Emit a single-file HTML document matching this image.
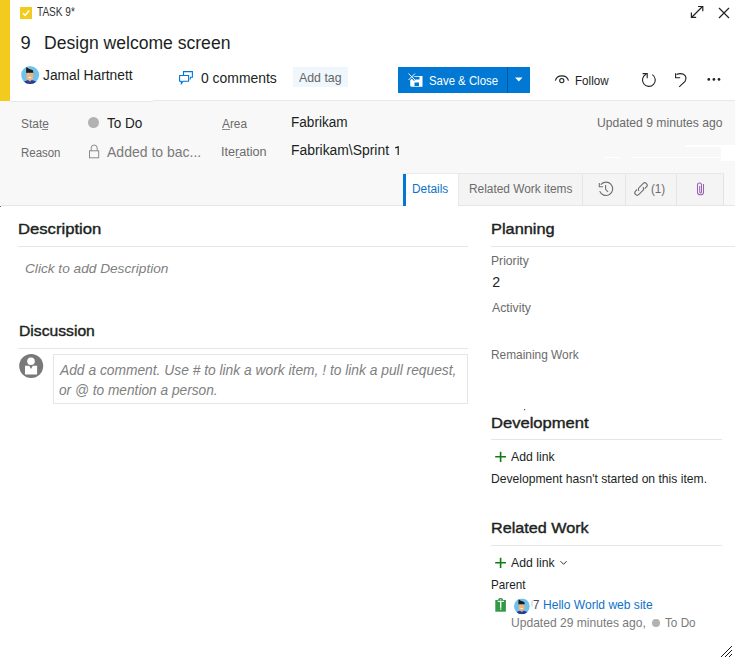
<!DOCTYPE html>
<html><head><meta charset="utf-8"><style>
html,body{margin:0;padding:0;}
body{width:735px;height:661px;position:relative;overflow:hidden;background:#fff;font-family:"Liberation Sans",sans-serif;}
.t{position:absolute;white-space:pre;line-height:1;transform-origin:0 0;}
.a{position:absolute;}

</style></head><body>
<div class="a" style="left:0;top:0;width:10px;height:101px;background:#f2cb1d"></div>
<div class="a" style="left:0;top:101px;width:153px;height:1px;background:#e8e8e8"></div>
<div class="a" style="left:0;top:102px;width:153px;height:103px;background:#f8f8f8"></div>
<div class="a" style="left:0;top:101px;width:10px;height:1px;background:#f8f8f8"></div>
<div class="a" style="left:153px;top:100px;width:582px;height:1px;background:#e8e8e8"></div>
<div class="a" style="left:153px;top:101px;width:582px;height:104px;background:#f8f8f8"></div>
<div class="a" style="left:1px;top:205px;width:734px;height:1px;background:#e6e6e6"></div>
<div class="a" style="left:0;top:206px;width:1px;height:1px;background:#666"></div>
<!-- glitch whites -->
<div class="a" style="left:685px;top:145px;width:50px;height:2px;background:#fff"></div>
<div class="a" style="left:721px;top:145px;width:14px;height:16px;background:#fff"></div>
<div class="a" style="left:631px;top:157px;width:90px;height:1px;background:#fff"></div>
<div class="a" style="left:605px;top:157px;width:15px;height:1px;background:#fff"></div>
<!-- tabs -->
<div class="a" style="left:403px;top:173px;width:321px;height:32px;background:#f4f4f4;box-sizing:border-box;border-top:1px solid #e8e8e8;border-right:1px solid #e3e3e3"></div>
<div class="a" style="left:403px;top:174px;width:3px;height:32px;background:#0078d4"></div>
<div class="a" style="left:406px;top:173px;width:52px;height:33px;background:#fff;border-top:1px solid #ebebeb;box-sizing:border-box"></div>
<div class="a" style="left:458px;top:174px;width:1px;height:31px;background:#e8e8e8"></div>
<div class="a" style="left:582px;top:174px;width:1px;height:31px;background:#e6e6e6"></div>
<div class="a" style="left:625px;top:174px;width:1px;height:31px;background:#e6e6e6"></div>
<div class="a" style="left:676px;top:174px;width:1px;height:31px;background:#e6e6e6"></div>
<!-- add tag -->
<div class="a" style="left:293px;top:67px;width:55px;height:20px;background:#eff6fc"></div>
<!-- save button -->
<div class="a" style="left:398px;top:67px;width:132px;height:26px;background:#0078d4"></div>
<div class="a" style="left:507px;top:67px;width:1px;height:26px;background:#005a9e"></div>
<!-- section lines -->
<div class="a" style="left:18px;top:246px;width:450px;height:1px;background:#e6e6e6"></div>
<div class="a" style="left:18px;top:348px;width:450px;height:1px;background:#e6e6e6"></div>
<div class="a" style="left:491px;top:246px;width:244px;height:1px;background:#e6e6e6"></div>
<div class="a" style="left:491px;top:439px;width:231px;height:1px;background:#e6e6e6"></div>
<div class="a" style="left:491px;top:545px;width:231px;height:1px;background:#e6e6e6"></div>
<!-- comment box -->
<div class="a" style="left:53px;top:354px;width:415px;height:50px;box-sizing:border-box;border:1px solid #e6e6e6"></div>
<!-- underlines -->
<div class="a" style="left:42px;top:129px;width:6px;height:1px;background:#8a8a8a"></div>
<div class="a" style="left:222px;top:129px;width:8px;height:1px;background:#8a8a8a"></div>
<div class="a" style="left:236px;top:157px;width:4px;height:1px;background:#8a8a8a"></div>
<svg class="a" style="left:0;top:0" width="735" height="661" viewBox="0 0 735 661">
  <!-- task checkbox -->
  <rect x="20" y="7" width="12" height="12" fill="#f2cb1d"/>
  <path d="M23 13.2 L25.2 15.4 L29.2 10.6" stroke="#fff" stroke-width="1.6" fill="none"/>
  <!-- expand -->
  <g stroke="#222" stroke-width="1.2" fill="none">
    <path d="M692 17 L702.5 6.5"/>
    <path d="M698 6.5 H702.8 V11.3"/>
    <path d="M691.4 12.5 V17.4 H696.2"/>
  </g>
  <!-- close -->
  <path d="M719 8 L729 18 M729 8 L719 18" stroke="#222" stroke-width="1.2" fill="none"/>
  
  <!-- Jamal avatar -->
  <defs><clipPath id="avc1"><circle cx="9" cy="9" r="9"/></clipPath></defs><g transform="translate(21.1 66.1) scale(1.0000)"><g clip-path="url(#avc1)">
        <rect width="18" height="18" fill="#6ec2ec"/>
        <path d="M2.5 18 L3.5 15.2 Q6 14.2 7.6 14 L9 15 L10.4 14 Q12 14.2 14.5 15.2 L15.5 18 Z" fill="#2b3990"/>
        <path d="M7.5 12.5 H10.2 V14.6 L8.85 15.6 L7.5 14.6 Z" fill="#d9a877"/>
        <path d="M5.3 6.8 H12.1 V11.8 Q12 14 8.7 14.1 Q5.4 14 5.3 11.8 Z" fill="#e6b888"/>
        <ellipse cx="5.1" cy="9" rx="0.6" ry="1" fill="#d9a877"/>
        <ellipse cx="12.3" cy="9" rx="0.6" ry="1" fill="#d9a877"/>
        <path d="M7.2 10.9 H10.3 Q10 12 8.75 12 Q7.5 12 7.2 10.9 Z" fill="#fff"/>
        <path d="M5 7.2 L5.1 0.9 Q7 2.8 11.8 4.1 L12.3 7.4 L11.9 6.7 H5.4 Z" fill="#1f1b1b"/>
      </g>
    </g>
  <!-- comments icon -->
  <g stroke="#0078d4" stroke-width="1.1" fill="none">
    <path d="M183.5 75 V71.6 H192.4 V77.2 H190.6 L190 79.5"/>
    <path d="M179.6 75.5 H188.6 V81.3 H183 L181.3 83.6 V81.3 H179.6 Z" fill="#fff"/>
  </g>
  <!-- save icon -->
  <g fill="#fff">
    <path d="M411.5 76 H422.5 V86.8 H411 L410.2 85.8 V79 Z M414 76.8 V79.5 H419.5 V76.8 Z M414.5 82.5 V86 H419 V82.5Z" fill-rule="evenodd"/>
    <path d="M408.5 73.5 L415 80 M415 73.5 L408.5 80" stroke="#0078d4" stroke-width="2.6"/>
    <path d="M408.5 73.5 L415 80 M415 73.5 L408.5 80" stroke="#fff" stroke-width="1"/>
  </g>
  <!-- dropdown triangle -->
  <path d="M515 77.5 H522.5 L518.75 81.5 Z" fill="#fff"/>
  <!-- eye -->
  <g stroke="#222" stroke-width="1.1" fill="none">
    <path d="M555.3 80.6 A6.8 6.2 0 0 1 568.5 80.6"/>
    <circle cx="561.8" cy="80.6" r="2.1"/>
  </g>
  <!-- refresh -->
  <g stroke="#222" stroke-width="1.1" fill="none">
    <path d="M652.3 74.6 A6.4 6.4 0 1 1 646.2 74.2"/>
    <path d="M642.6 73.6 H647.2 V78.2"/>
  </g>
  <!-- undo -->
  <g stroke="#222" stroke-width="1.1" fill="none">
    <path d="M676.5 74.5 Q680 72.8 683.5 74.3 Q687.5 77 685 81.5 L679.2 86.8"/>
    <path d="M675.6 73.2 V77.8 H680.2"/>
  </g>
  <!-- dots -->
  <g fill="#222">
    <circle cx="708.8" cy="79.4" r="1.35"/>
    <circle cx="713.9" cy="79.4" r="1.35"/>
    <circle cx="719" cy="79.4" r="1.35"/>
  </g>
  <!-- state circle -->
  <circle cx="93.5" cy="122.5" r="5.5" fill="#b2b2b2"/>
  <!-- lock -->
  <g stroke="#8a8a8a" stroke-width="1" fill="none">
    <rect x="89.5" y="150.8" width="9.2" height="7"/>
    <path d="M91.2 150.8 V148 A3 3 0 0 1 97.2 148 V150.8"/>
  </g>
  <!-- history -->
  <g stroke="#707070" stroke-width="1.1" fill="none">
    <path d="M600.7 184.7 A6.7 6.7 0 1 1 599.7 191.1"/>
    <path d="M599.3 182.9 V186.8 H603.1"/>
    <path d="M605.6 184.9 V189.3 L608.1 191.8"/>
  </g>
  <!-- link -->
  <g stroke="#707070" stroke-width="1.1" fill="none" transform="translate(641 189) rotate(-45)">
    <path d="M3.1 2.4 H5.3 A2.4 2.4 0 0 0 5.3 -2.4 H-0.3 A2.4 2.4 0 0 0 -2.7 0"/>
    <path d="M-3.1 -2.4 H-5.3 A2.4 2.4 0 0 0 -5.3 2.4 H0.3 A2.4 2.4 0 0 0 2.7 0"/>
  </g>
  <!-- paperclip -->
  <g stroke="#9a62b4" stroke-width="1.05" fill="none">
    <path d="M699.7 186 V192 A0.9 0.9 0 0 0 701.5 192 V185 A2 2 0 0 0 697.5 185 V192.4 A3 2.3 0 0 0 703.5 192.4 V184"/>
  </g>
  <!-- person avatar -->
  <circle cx="31.2" cy="366" r="12" fill="#797979"/>
  <circle cx="31" cy="361.2" r="3.8" fill="#fff"/>
  <path d="M25 365.8 H29.2 L31 369 L32.8 365.8 H37.1 V374.4 H25 Z" fill="#fff"/>
  <!-- plus icons -->
  <g stroke="#107c10" stroke-width="1.6">
    <path d="M495.2 456.8 H506 M500.6 451.7 V462"/>
    <path d="M495.2 562.8 H506 M500.6 557.7 V568"/>
  </g>
  <!-- chevron -->
  <path d="M560.5 561.2 L563.6 564.3 L566.6 561.2" stroke="#333" stroke-width="1" fill="none"/>
  <!-- green task icon -->
  <g>
    <rect x="495.3" y="600" width="10.6" height="11.7" fill="#339947"/>
    <path d="M498.3 600.5 V599.2 Q498.5 598 500.6 598 Q502.7 598 502.9 599.2 V600.5 Z" fill="#339947"/>
    <rect x="500.2" y="599.3" width="0.9" height="1" fill="#fff"/>
    <rect x="497.7" y="600.8" width="6.3" height="1.1" fill="#fff"/>
    <rect x="500" y="602" width="1.4" height="5.8" fill="#fff"/>
    <rect x="500" y="608.5" width="1.4" height="1.2" fill="#fff"/>
  </g>
  <!-- small avatar -->
  <defs><clipPath id="avc2"><circle cx="9" cy="9" r="9"/></clipPath></defs><g transform="translate(514 598.4) scale(0.8778)"><g clip-path="url(#avc2)">
        <rect width="18" height="18" fill="#6ec2ec"/>
        <path d="M2.5 18 L3.5 15.2 Q6 14.2 7.6 14 L9 15 L10.4 14 Q12 14.2 14.5 15.2 L15.5 18 Z" fill="#2b3990"/>
        <path d="M7.5 12.5 H10.2 V14.6 L8.85 15.6 L7.5 14.6 Z" fill="#d9a877"/>
        <path d="M5.3 6.8 H12.1 V11.8 Q12 14 8.7 14.1 Q5.4 14 5.3 11.8 Z" fill="#e6b888"/>
        <ellipse cx="5.1" cy="9" rx="0.6" ry="1" fill="#d9a877"/>
        <ellipse cx="12.3" cy="9" rx="0.6" ry="1" fill="#d9a877"/>
        <path d="M7.2 10.9 H10.3 Q10 12 8.75 12 Q7.5 12 7.2 10.9 Z" fill="#fff"/>
        <path d="M5 7.2 L5.1 0.9 Q7 2.8 11.8 4.1 L12.3 7.4 L11.9 6.7 H5.4 Z" fill="#1f1b1b"/>
      </g>
    </g>
  <rect x="531.6" y="600.5" width="0.8" height="6" fill="#9cc8ea"/>
  <path d="M395.2 147.9 L398.2 146.9 V155" stroke="#201f1e" stroke-width="1.2" fill="none"/>
  <!-- dot todo -->
  <circle cx="656" cy="623" r="4" fill="#b2b2b2"/>
  <!-- resize -->
  <g fill="#1a1a1a" shape-rendering="crispEdges"><rect x="721" y="656" width="1" height="1"/><rect x="722" y="655" width="1" height="1"/><rect x="723" y="654" width="1" height="1"/><rect x="724" y="653" width="1" height="1"/><rect x="725" y="652" width="1" height="1"/><rect x="726" y="651" width="1" height="1"/><rect x="727" y="650" width="1" height="1"/><rect x="728" y="649" width="1" height="1"/><rect x="729" y="648" width="1" height="1"/><rect x="730" y="647" width="1" height="1"/><rect x="731" y="646" width="1" height="1"/><rect x="725" y="656" width="1" height="1"/><rect x="726" y="655" width="1" height="1"/><rect x="727" y="654" width="1" height="1"/><rect x="728" y="653" width="1" height="1"/><rect x="729" y="652" width="1" height="1"/><rect x="730" y="651" width="1" height="1"/><rect x="731" y="650" width="1" height="1"/><rect x="729" y="656" width="1" height="1"/><rect x="730" y="655" width="1" height="1"/><rect x="731" y="654" width="1" height="1"/></g>
  <!-- small dot in dev -->
  <rect x="524" y="409" width="1.2" height="1.2" fill="#555"/>
</svg>

<div class="t" style="left:37.20px;top:6.14px;font-size:12px;color:#333;transform:scaleX(0.8376);">TASK 9*</div>
<div class="t" style="left:20.60px;top:33.51px;font-size:18.3px;color:#201f1e;">9</div>
<div class="t" style="left:44.40px;top:33.51px;font-size:18.3px;color:#201f1e;transform:scaleX(0.9606);">Design welcome screen</div>
<div class="t" style="left:43.00px;top:68.35px;font-size:14px;color:#201f1e;transform:scaleX(0.9841);">Jamal Hartnett</div>
<div class="t" style="left:200.60px;top:71.28px;font-size:14.2px;color:#201f1e;transform:scaleX(0.9809);">0 comments</div>
<div class="t" style="left:299.20px;top:72.16px;font-size:12.8px;color:#666;transform:scaleX(0.9658);">Add tag</div>
<div class="t" style="left:429.20px;top:75.06px;font-size:12.8px;color:#fff;transform:scaleX(0.8900);">Save &amp; Close</div>
<div class="t" style="left:575.40px;top:75.06px;font-size:12.8px;color:#201f1e;transform:scaleX(0.9088);">Follow</div>
<div class="t" style="left:20.80px;top:117.99px;font-size:12.3px;color:#6b6b6b;transform:scaleX(0.9709);">State</div>
<div class="t" style="left:20.80px;top:146.99px;font-size:12.3px;color:#6b6b6b;transform:scaleX(0.9315);">Reason</div>
<div class="t" style="left:106.80px;top:116.38px;font-size:14.2px;color:#201f1e;transform:scaleX(0.9552);">To Do</div>
<div class="t" style="left:106.80px;top:145.28px;font-size:14.2px;color:#7a7a7a;transform:scaleX(0.9871);">Added to bac...</div>
<div class="t" style="left:222.20px;top:117.89px;font-size:12.3px;color:#6b6b6b;transform:scaleX(0.9629);">Area</div>
<div class="t" style="left:221.20px;top:145.89px;font-size:12.3px;color:#6b6b6b;transform:scaleX(1.0272);">Iteration</div>
<div class="t" style="left:291.40px;top:115.15px;font-size:14px;color:#201f1e;transform:scaleX(0.9709);">Fabrikam</div>
<div class="t" style="left:291.40px;top:142.95px;font-size:14px;color:#201f1e;transform:scaleX(0.9918);">Fabrikam\Sprint</div>
<div class="t" style="left:596.80px;top:117.47px;font-size:12.2px;color:#6b6b6b;transform:scaleX(0.9952);">Updated 9 minutes ago</div>
<div class="t" style="left:412.00px;top:183.24px;font-size:12px;color:#0e72c8;transform:scaleX(0.9889);">Details</div>
<div class="t" style="left:469.20px;top:183.24px;font-size:12px;color:#6b6b6b;transform:scaleX(0.9898);">Related Work items</div>
<div class="t" style="left:651.20px;top:183.07px;font-size:12.2px;color:#6b6b6b;transform:scaleX(0.9545);">(1)</div>
<div class="t" style="left:18.20px;top:220.70px;font-size:15.0px;color:#201f1e;transform:scaleX(1.1093);-webkit-text-stroke:0.4px #201f1e;">Description</div>
<div class="t" style="left:24.60px;top:261.97px;font-size:13.5px;font-style:italic;color:#808080;transform:scaleX(1.0114);">Click to add Description</div>
<div class="t" style="left:19.20px;top:323.30px;font-size:15.0px;color:#201f1e;transform:scaleX(1.0455);-webkit-text-stroke:0.4px #201f1e;">Discussion</div>
<div class="t" style="left:59.80px;top:364.32px;font-size:13.8px;font-style:italic;color:#808080;transform:scaleX(0.9999);">Add a comment. Use # to link a work item, ! to link a pull request,</div>
<div class="t" style="left:58.80px;top:383.62px;font-size:13.8px;font-style:italic;color:#808080;transform:scaleX(0.9931);">or @ to mention a person.</div>
<div class="t" style="left:491.20px;top:221.30px;font-size:15.0px;color:#201f1e;transform:scaleX(1.0898);-webkit-text-stroke:0.4px #201f1e;">Planning</div>
<div class="t" style="left:491.20px;top:255.07px;font-size:12.2px;color:#6b6b6b;transform:scaleX(0.9976);">Priority</div>
<div class="t" style="left:492.30px;top:275.28px;font-size:14.2px;color:#201f1e;">2</div>
<div class="t" style="left:492.20px;top:301.67px;font-size:12.2px;color:#6b6b6b;transform:scaleX(1.0101);">Activity</div>
<div class="t" style="left:491.20px;top:348.77px;font-size:12.2px;color:#6b6b6b;transform:scaleX(0.9752);">Remaining Work</div>
<div class="t" style="left:491.20px;top:414.50px;font-size:15.0px;color:#201f1e;transform:scaleX(1.1043);-webkit-text-stroke:0.4px #201f1e;">Development</div>
<div class="t" style="left:511.00px;top:451.06px;font-size:12.8px;color:#201f1e;transform:scaleX(0.9576);">Add link</div>
<div class="t" style="left:491.00px;top:473.43px;font-size:12.6px;color:#201f1e;transform:scaleX(0.9630);">Development hasn't started on this item.</div>
<div class="t" style="left:491.20px;top:520.00px;font-size:15.0px;color:#201f1e;transform:scaleX(1.0774);-webkit-text-stroke:0.4px #201f1e;">Related Work</div>
<div class="t" style="left:511.00px;top:556.96px;font-size:12.8px;color:#201f1e;transform:scaleX(0.9576);">Add link</div>
<div class="t" style="left:491.00px;top:579.03px;font-size:12.6px;color:#201f1e;transform:scaleX(0.9282);">Parent</div>
<div class="t" style="left:532.60px;top:598.93px;font-size:12.6px;color:#4a4a4a;transform:scaleX(0.9137);">7</div>
<div class="t" style="left:542.60px;top:598.93px;font-size:12.6px;color:#0e72c8;transform:scaleX(0.9568);">Hello World web site</div>
<div class="t" style="left:510.80px;top:616.93px;font-size:12.6px;color:#7a7a7a;transform:scaleX(0.9580);">Updated 29 minutes ago,</div>
<div class="t" style="left:665.20px;top:616.93px;font-size:12.6px;color:#7a7a7a;transform:scaleX(0.9306);">To Do</div>
</body></html>
